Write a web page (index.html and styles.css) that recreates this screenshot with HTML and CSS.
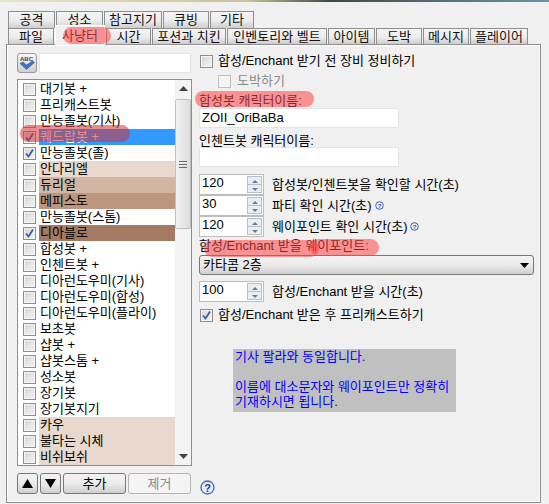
FILE: index.html
```html
<!DOCTYPE html>
<html lang="ko">
<head>
<meta charset="utf-8">
<title>사냥터</title>
<link rel="stylesheet" href="styles.css">
</head>
<body>
<div class="stripe"></div>
<div class="page">
  <div class="tabs row1">
    <div class="tab w47">공격</div><div class="tab w47">성소</div><div class="tab w58">참고지기</div><div class="tab w46">큐빙</div><div class="tab w44">기타</div>
  </div>
  <div class="tabs row2">
    <div class="tab w46">파일</div><div class="tab active">사냥터</div><div class="tab w45">시간</div><div class="tab w74">포션과 치킨</div><div class="tab w100">인벤토리와 벨트</div><div class="tab w47">아이템</div><div class="tab w46">도박</div><div class="tab w46">메시지</div><div class="tab w58">플레이어</div>
  </div>
  <div class="panel">
    <div class="left">
      <div class="search">
        <div class="abc">
          <svg width="20" height="20" viewBox="0 0 20 20"><text x="3" y="8" class="abc-text">ABC</text><path d="M3 10.5l3-1.5 3.5 3 6-4 2 1.5-8 7z" fill="#3f74c4" stroke="#24508f" stroke-width=".5"/></svg>
        </div>
        <div class="field search-field"></div>
      </div>
      <div class="listbox">
        <div class="items">
          <div class="item"><span class="cb"></span><span class="lbl">대기봇 +</span></div>
          <div class="item"><span class="cb"></span><span class="lbl">프리캐스트봇</span></div>
          <div class="item"><span class="cb"></span><span class="lbl">만능졸봇(기사)</span></div>
          <div class="item"><span class="cb on"><svg width="11" height="11" viewBox="0 0 11 11"><path d="M2 5.5l2.5 3L9 1.5" class="tick"/></svg></span><span class="lbl sel">퀘드랍봇 +</span></div>
          <div class="item"><span class="cb on"><svg width="11" height="11" viewBox="0 0 11 11"><path d="M2 5.5l2.5 3L9 1.5" class="tick"/></svg></span><span class="lbl">만능졸봇(졸)</span></div>
          <div class="item"><span class="cb"></span><span class="lbl c1">안다리엘</span></div>
          <div class="item"><span class="cb"></span><span class="lbl c2">듀리얼</span></div>
          <div class="item"><span class="cb"></span><span class="lbl c3">메피스토</span></div>
          <div class="item"><span class="cb"></span><span class="lbl">만능졸봇(스톰)</span></div>
          <div class="item"><span class="cb on"><svg width="11" height="11" viewBox="0 0 11 11"><path d="M2 5.5l2.5 3L9 1.5" class="tick"/></svg></span><span class="lbl c4">디아블로</span></div>
          <div class="item"><span class="cb"></span><span class="lbl">합성봇 +</span></div>
          <div class="item"><span class="cb"></span><span class="lbl">인첸트봇 +</span></div>
          <div class="item"><span class="cb"></span><span class="lbl">디아런도우미(기사)</span></div>
          <div class="item"><span class="cb"></span><span class="lbl">디아런도우미(합성)</span></div>
          <div class="item"><span class="cb"></span><span class="lbl">디아런도우미(플라이)</span></div>
          <div class="item"><span class="cb"></span><span class="lbl">보초봇</span></div>
          <div class="item"><span class="cb"></span><span class="lbl">샵봇 +</span></div>
          <div class="item"><span class="cb"></span><span class="lbl">샵봇스톰 +</span></div>
          <div class="item"><span class="cb"></span><span class="lbl">성소봇</span></div>
          <div class="item"><span class="cb"></span><span class="lbl">장기봇</span></div>
          <div class="item"><span class="cb"></span><span class="lbl">장기봇지기</span></div>
          <div class="item"><span class="cb"></span><span class="lbl c1">카우</span></div>
          <div class="item"><span class="cb"></span><span class="lbl c1">불타는 시체</span></div>
          <div class="item"><span class="cb"></span><span class="lbl c1">비쉬보쉬</span></div>
        </div>
        <div class="scroll">
          <div class="sarrow"><svg width="9" height="5" viewBox="0 0 9 5"><path d="M4.5 0L9 5H0z" fill="#444"/></svg></div>
          <div class="thumb"><svg width="8" height="7" viewBox="0 0 8 7"><path d="M0 .5h8M0 3.5h8M0 6.5h8" stroke="#666"/></svg></div>
          <div class="sarrow down"><svg width="9" height="5" viewBox="0 0 9 5"><path d="M0 0h9L4.500 5z" fill="#444"/></svg></div>
        </div>
      </div>
      <div class="buttons">
        <button class="btn sq"><svg width="11" height="9" viewBox="0 0 11 9"><path d="M5.500 0L11 9H0z" fill="#000"/></svg></button>
        <button class="btn sq"><svg width="11" height="9" viewBox="0 0 11 9"><path d="M0 0h11L5.500 9z" fill="#000"/></svg></button>
        <button class="btn wide">추가</button>
        <button class="btn wide off">제거</button>
      </div>
    </div>
    <div class="right">
      <div class="line first"><span class="cb"></span><span>합성/Enchant 받기 전 장비 정비하기</span></div>
      <div class="line sub dim"><span class="cb blank"></span><span>도박하기</span></div>
      <div class="label l1">합성봇 캐릭터이름:</div>
      <div class="field text-field">ZOII_OriBaBa</div>
      <div class="label l2">인첸트봇 캐릭터이름:</div>
      <div class="field text-field"></div>
      <div class="spins">
        <div class="spinrow"><div class="spin"><span class="val">120</span><span class="arrows"><i class="up"></i><i class="dn"></i></span></div><span>합성봇/인첸트봇을 확인할 시간(초)</span></div>
        <div class="spinrow"><div class="spin"><span class="val">30</span><span class="arrows"><i class="up"></i><i class="dn"></i></span></div><span>파티 확인 시간(초)</span><svg class="hint" width="9" height="9" viewBox="0 0 9 9"><circle cx="4.500" cy="4.500" r="3.800" class="hint-c"/><text x="4.500" y="7" class="hint-t">?</text></svg></div>
        <div class="spinrow"><div class="spin"><span class="val">120</span><span class="arrows"><i class="up"></i><i class="dn"></i></span></div><span>웨이포인트 확인 시간(초)</span><svg class="hint" width="9" height="9" viewBox="0 0 9 9"><circle cx="4.500" cy="4.500" r="3.800" class="hint-c"/><text x="4.500" y="7" class="hint-t">?</text></svg></div>
      </div>
      <div class="label l3">합성/Enchant 받을 웨이포인트:</div>
      <div class="select"><span>카타콤 2층</span><svg width="9" height="5" viewBox="0 0 9 5"><path d="M0 0h9L4.500 5z" fill="#000"/></svg></div>
      <div class="spinrow solo"><div class="spin"><span class="val">100</span><span class="arrows"><i class="up"></i><i class="dn"></i></span></div><span>합성/Enchant 받을 시간(초)</span></div>
      <div class="line after"><span class="cb on"><svg width="11" height="11" viewBox="0 0 11 11"><path d="M2 5.500l2.500 3L9 1.500" class="tick"/></svg></span><span>합성/Enchant 받은 후 프리캐스트하기</span></div>
      <div class="note">기사 팔라와 동일합니다.<br><br>이름에 대소문자와 웨이포인트만 정확히<br>기재하시면 됩니다.</div>
      <svg class="help" width="15" height="15" viewBox="0 0 15 15"><circle cx="7.500" cy="7.500" r="6.500" class="help-c"/><text x="7.500" y="11.500" class="help-t">?</text></svg>
    </div>
    <div class="mark m-tab"></div>
    <div class="mark m-sel"></div>
    <div class="mark m-name"></div>
    <div class="mark m-wp1"></div>
    <div class="mark m-wp2"></div>
  </div>
</div>
</body>
</html>
```
FILE: styles.css
```css
* { box-sizing: border-box; }
html, body { margin: 0; padding: 0; }
body {
  width: 549px; height: 504px; overflow: hidden; background: #f0f0f0;
  font-family: "Liberation Sans", "Noto Sans CJK KR", sans-serif;
  font-size: 13px; line-height: 16px; color: #000;
}
.stripe { height: 2px; background: linear-gradient(90deg, #e8e4c8 0, #c9c39a 45%, #3d4a44 60%, #6c93a3 100%); }
.page { padding: 9px 0 0 6px; }
.tabs { display: flex; padding-left: 2px; }
.row1 { height: 17px; gap: 1px; }
.row2 { height: 16px; gap: 1px; position: relative; z-index: 2; }
.tab {
  height: 100%; border: 1px solid #8e8e8e; border-bottom: 0; text-align: center; white-space: nowrap;
  background: linear-gradient(#f4f4f4 0, #ececec 55%, #cdcdcd 100%);
  line-height: 15px; color: #111;
}
.w44 { width: 44px; } .w45 { width: 45px; } .w46 { width: 46px; } .w47 { width: 47px; }
.w58 { width: 58px; } .w74 { width: 74px; } .w100 { width: 100px; }
.tab.active {
  width: 50px; height: 20px; margin-top: -3px; background: #f0f0f0;
  border: 1px solid #fff; border-bottom: 0; line-height: 20px;
}
.panel {
  position: relative; width: 535px; height: 459px; display: flex;
  border: 1px solid #8e8e8e; outline: 1px solid #fff; outline-offset: -2px;
  padding: 8px 0 0 10px; background: #f0f0f0;
}
.left { width: 175px; flex: none; }
.search { display: flex; gap: 2px; height: 20px; }
.abc {
  width: 20px; height: 20px; border: 1px solid #9a9a9a; border-radius: 3px;
  background: linear-gradient(#f6f6f6, #cfcfcf); overflow: hidden;
}
.abc svg { display: block; margin: -1px; }
.abc-text { font: bold 6px "Liberation Sans", sans-serif; fill: #445; }
.field { background: #fff; border: 1px solid #e4e4e4; border-radius: 1px; }
.search-field { width: 152px; height: 20px; }
.listbox { display: flex; height: 387px; margin-top: 6px; border: 1px solid #8e8e8e; background: #fff; }
.items { width: 157px; padding-top: 1px; flex: none; }
.item { display: flex; height: 16px; align-items: center; padding-left: 5px; }
.cb {
  width: 13px; height: 13px; flex: none; border: 1px solid #8e8f8f; outline: 1px solid #f4f4f4; outline-offset: -2px;
  background: linear-gradient(135deg, #d6d6d6, #f4f4f4); display: flex; align-items: center; justify-content: center;
}
.tick { fill: none; stroke: #3a5fa8; stroke-width: 1.800; }
.lbl { flex: 1; height: 16px; margin-left: 3px; padding-left: 1px; white-space: nowrap; }
.sel { background: #3399ff; color: #fff; }
.c1 { background: #e9d8cd; }
.c2 { background: #d2b5a2; }
.c3 { background: #bc967f; }
.c4 { background: #a57a62; }
.scroll { flex: 1; display: flex; flex-direction: column; background: #f3f3f3; }
.sarrow { height: 17px; display: flex; align-items: center; justify-content: center; }
.thumb {
  height: 130px; margin: 2px 0 auto; border: 1px solid #c0c0c0; border-radius: 2px;
  background: linear-gradient(90deg, #f2f2f2, #dcdcdc); display: flex; align-items: center; justify-content: center;
}
.buttons { display: flex; gap: 2px; margin-top: 7px; }
.btn {
  height: 21px; padding: 0; border: 1px solid #777; border-radius: 3px; font: inherit; color: #000;
  background: linear-gradient(#f3f3f3 0, #ebebeb 50%, #cfcfcf 100%); line-height: 17px;
}
.sq { width: 21px; display: flex; align-items: center; justify-content: center; }
.wide { width: 63px; }
.off { background: #f4f4f4; border-color: #b5b5b5; color: #8a8a8a; }
.right { position: relative; width: 336px; margin-left: 7px; flex: none; display: flex; flex-direction: column; white-space: nowrap; }
.line { display: flex; align-items: center; gap: 5px; height: 16px; flex: none; }
.first { margin: 0 0 0 1px; }
.sub { margin: 4px 0 0 19px; gap: 6px; }
.dim { color: #8a8a8a; }
.blank { background: #f4f4f4; border-color: #c0c0c0; outline: 0; }
.label { height: 16px; flex: none; }
.l1 { margin-top: 4px; }
.l2 { margin-top: 5px; }
.l3 { margin-top: 1px; }
.text-field { width: 200px; height: 20px; flex: none; line-height: 18px; padding-left: 2px; }
.l1 + .text-field { margin-top: -1px; }
.l2 + .text-field { margin-top: -2px; }
.spins { margin-top: 7px; display: flex; flex-direction: column; flex: none; }
.spinrow { display: flex; align-items: center; height: 21px; flex: none; }
.spinrow > span:last-of-type { margin-left: 8px; }
.spin { width: 65px; height: 21px; flex: none; display: flex; justify-content: space-between; background: #fff; border: 1px solid #bdbdbd; }
.val { line-height: 15px; padding-left: 2px; }
.arrows { width: 15px; display: flex; flex-direction: column; margin: 1px; background: #e8eef2; border: 1px solid #b7c0c7; }
.arrows i { flex: 1; display: block; position: relative; }
.arrows .up { border-bottom: 1px solid #b7c0c7; }
.arrows .up::after, .arrows .dn::after {
  content: ""; position: absolute; left: 4px; top: 3px; border: 3px solid transparent; border-top: 0; border-bottom: 3px solid #6b7c93;
}
.arrows .dn::after { border-bottom: 0; border-top: 3px solid #6b7c93; }
.hint { margin-left: 3px; }
.hint-c { fill: #eef2fb; stroke: #3f5db0; }
.hint-t { font: bold 6px "Liberation Sans", sans-serif; fill: #27448f; text-anchor: middle; }
.select {
  width: 335px; height: 20px; flex: none; margin-top: 1px; padding: 0 4px 0 3px; display: flex; align-items: center; justify-content: space-between;
  border: 1px solid #777; border-radius: 3px; background: linear-gradient(#f3f3f3 0, #ebebeb 50%, #cfcfcf 100%);
}
.solo { margin-top: 6px; }
.after { margin: 5px 0 0 1px; }
.note {
  width: 223px; height: 63px; flex: none; margin: 26px 0 0 34px; padding: 0 2px; background: #c0c0c0; color: #0000ff; line-height: 15px;
}
.help { position: absolute; left: 1px; top: 427px; }
.help-c { fill: #e6ecfa; stroke: #4a66b5; stroke-width: 1.300; }
.help-t { font: bold 11px "Liberation Sans", sans-serif; fill: #1f3a85; text-anchor: middle; }
.mark { position: absolute; border-radius: 9px; pointer-events: none; }
.m-tab { left: 56px; top: -18px; width: 48px; height: 17px; background: rgba(255, 70, 70, .55); z-index: 3; }
.m-sel { left: 13px; top: 80px; width: 110px; height: 17px; background: rgba(210, 50, 50, .55); }
.m-name { left: 188px; top: 46px; width: 119px; height: 16px; background: rgba(255, 70, 70, .55); }
.m-wp1 { left: 197px; top: 195px; width: 115px; height: 17px; background: rgba(255, 70, 70, .55); }
.m-wp2 { left: 303px; top: 194px; width: 69px; height: 17px; background: rgba(255, 70, 70, .55); }
```
